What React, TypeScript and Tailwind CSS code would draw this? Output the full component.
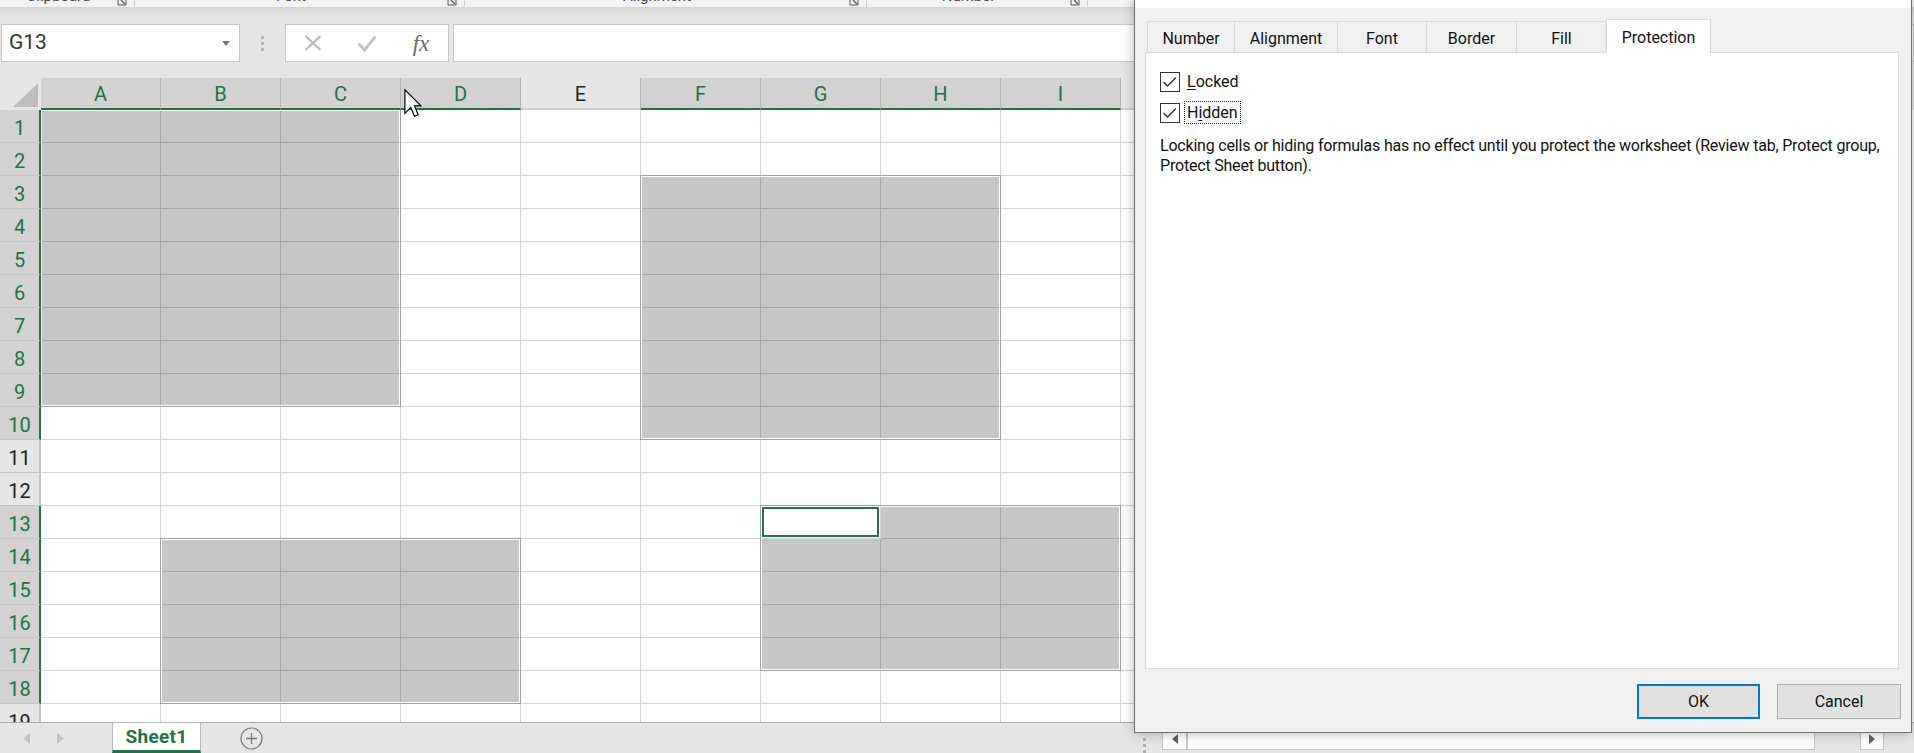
import React from 'react';

const COLS = ['A', 'B', 'C', 'D', 'E', 'F', 'G', 'H', 'I', 'J'];
const SEL_COLS = [0, 1, 2, 3, 5, 6, 7, 8];
const SEL_ROWS = [1, 2, 3, 4, 5, 6, 7, 8, 9, 10, 13, 14, 15, 16, 17, 18];
const ROWS = Array.from({ length: 19 }, (_, i) => i + 1);
const BLOCKS = [
  { c0: 0, c1: 2, r0: 1, r1: 9 },
  { c0: 5, c1: 7, r0: 3, r1: 10 },
  { c0: 1, c1: 3, r0: 14, r1: 18 },
  { c0: 6, c1: 8, r0: 13, r1: 17 },
];
const inBlock = (ci: number, r: number) =>
  BLOCKS.some((b) => ci >= b.c0 && ci <= b.c1 && r >= b.r0 && r <= b.r1);

function Launcher() {
  return (
    <svg width="10" height="8" viewBox="0 0 10 8" className="shrink-0">
      <path d="M1 0 V5 H9 V0" fill="none" stroke="#555" strokeWidth="1" />
      <path d="M4 0 L8 4" stroke="#555" strokeWidth="1.2" />
    </svg>
  );
}

function RibbonGroup({ label, className }: { label: string; className: string }) {
  return (
    <div className={`flex h-full shrink-0 items-start border-r border-[#d0d0d0] ${className}`}>
      <div className="-mt-[14px] flex-1 text-center">{label}</div>
      <div className="mr-[7px]">
        <Launcher />
      </div>
    </div>
  );
}

function CheckBox() {
  return (
    <div className="relative h-[20px] w-[20px] shrink-0 border border-[#333] bg-white">
      <svg width="18" height="18" viewBox="0 0 18 18" className="absolute left-0 top-0">
        <path d="M2.5 9 L6.5 13 L15 4.5" fill="none" stroke="#333" strokeWidth="1.5" />
      </svg>
    </div>
  );
}

function Tab({ label, className, active }: { label: string; className: string; active?: boolean }) {
  return active ? (
    <div
      className={`relative z-10 -mb-px -ml-px flex h-[34px] items-center justify-center border-x border-t border-[#d9d9d9] bg-white pt-[3px] ${className}`}
    >
      {label}
    </div>
  ) : (
    <div
      className={`-ml-px flex h-[31px] items-center justify-center border-x border-t border-[#d9d9d9] bg-[#f0f0f0] pt-[3px] first:ml-0 ${className}`}
    >
      {label}
    </div>
  );
}

export default function App() {
  return (
    <div className="relative h-[753px] w-[1914px] overflow-hidden bg-[#e6e6e6] font-['Roboto','Liberation_Sans',sans-serif] text-[#222]">
      {/* ribbon remnant */}
      <div className="flex h-[8px] overflow-hidden border-b border-[#d6d6d6] bg-[#f3f3f3] text-[15px] leading-[20px] text-[#444]">
        <RibbonGroup label="Clipboard" className="w-[135px]" />
        <RibbonGroup label="Font" className="w-[330px]" />
        <RibbonGroup label="Alignment" className="w-[402px]" />
        <RibbonGroup label="Number" className="w-[221px]" />
        <div className="flex-1" />
      </div>
      <div className="h-[8px] bg-gradient-to-b from-[#dadada] to-[#e6e6e6]" />

      {/* formula bar */}
      <div className="mt-[8px] flex h-[38px]">
        <div className="ml-[1px] flex w-[239px] shrink-0 items-center border border-[#c6c6c6] bg-white pl-[7px] pr-[9px]">
          <span className="flex-1 text-[21px] text-[#333]">G13</span>
          <svg width="8" height="5" viewBox="0 0 8 5">
            <path d="M0 0 H8 L4 5 Z" fill="#777" />
          </svg>
        </div>
        <div className="flex w-[45px] shrink-0 flex-col items-center justify-center gap-[3px]">
          <div className="h-[3px] w-[3px] bg-[#b5b5b5]" />
          <div className="h-[3px] w-[3px] bg-[#b5b5b5]" />
          <div className="h-[3px] w-[3px] bg-[#b5b5b5]" />
        </div>
        <div className="flex w-[164px] shrink-0 items-center border border-[#c6c6c6] bg-white">
          <div className="flex w-[54px] justify-center">
            <svg width="18" height="16" viewBox="0 0 18 16">
              <path d="M1.5 1 L16.5 15 M16.5 1 L1.5 15" stroke="#b6b6b6" strokeWidth="2" />
            </svg>
          </div>
          <div className="flex w-[54px] justify-center">
            <svg width="20" height="17" viewBox="0 0 20 17">
              <path d="M1.5 8.5 L7.5 15 L18.5 1.5" fill="none" stroke="#c4c4c4" strokeWidth="3" />
            </svg>
          </div>
          <div className="flex w-[54px] justify-center font-['Liberation_Serif',serif] text-[23px] italic leading-none text-[#6a6a6a]">
            fx
          </div>
        </div>
        <div className="ml-[4px] flex-1 border border-[#c6c6c6] bg-white" />
      </div>
      <div className="h-[16px]" />

      {/* column headers */}
      <div className="flex h-[32px]">
        <div className="relative w-[41px] shrink-0">
          <svg width="41" height="32" viewBox="0 0 41 32" className="absolute left-0 top-0">
            <path d="M38 5 L38 29 L13 29 Z" fill="#bdbdbd" />
          </svg>
        </div>
        {COLS.map((c, ci) => {
          const sel = SEL_COLS.includes(ci);
          return (
            <div
              key={c}
              className={`flex w-[120px] shrink-0 items-center justify-center border-b-2 border-r border-r-[#b4b4b4] pt-[2px] text-[20px] ${
                sel ? 'border-b-[#217346] bg-[#d2d2d2] text-[#217346]' : 'border-b-[#cdcdcd] bg-[#e6e6e6] text-[#222]'
              }`}
            >
              {c}
            </div>
          );
        })}
      </div>

      {/* grid body */}
      <div className="relative h-[612px] overflow-hidden bg-white">
        {ROWS.map((r) => {
          const selRow = SEL_ROWS.includes(r);
          return (
            <div key={r} className="flex h-[33px]">
              <div
                className={`relative z-10 flex w-[41px] shrink-0 items-center justify-center border-b border-r-2 border-b-[#c4c4c4] pt-[3px] text-[20px] ${
                  selRow ? 'border-r-[#217346] bg-[#d2d2d2] text-[#217346]' : 'border-r-[#c4c4c4] bg-[#e6e6e6] text-[#222]'
                }`}
              >
                {r}
              </div>
              {COLS.map((c, ci) => {
                const act = ci === 6 && r === 13;
                const sel = inBlock(ci, r) && !act;
                return (
                  <div
                    key={c}
                    className={`h-full w-[120px] shrink-0 border-b border-r ${
                      sel ? 'border-[#a6a6a6] bg-[#c6c6c6]' : 'border-[#d4d4d4] bg-white'
                    }`}
                  >
                    {act && <div className="m-[1px] h-[30px] border-2 border-[#217346]" />}
                  </div>
                );
              })}
            </div>
          );
        })}
        {BLOCKS.map((b, i) => (
          <div
            key={i}
            className="pointer-events-none absolute border border-white outline outline-1 outline-[#a0a0a0]"
            style={{
              left: 41 + b.c0 * 120,
              top: (b.r0 - 1) * 33,
              width: (b.c1 - b.c0 + 1) * 120 - 1,
              height: (b.r1 - b.r0 + 1) * 33 - 1,
            }}
          />
        ))}
      </div>

      {/* sheet tab bar */}
      <div className="flex h-[31px] border-t border-[#a8a8a8] bg-[#e6e6e6]">
        <div className="flex w-[112px] shrink-0 items-center">
          <svg width="7" height="11" viewBox="0 0 7 11" className="ml-[23px]">
            <path d="M7 0 L0 5.5 L7 11 Z" fill="#c4c4c4" />
          </svg>
          <svg width="7" height="11" viewBox="0 0 7 11" className="ml-[27px]">
            <path d="M0 0 L7 5.5 L0 11 Z" fill="#c4c4c4" />
          </svg>
        </div>
        <div className="-mt-px flex w-[89px] shrink-0 items-center justify-center border-x border-t border-[#b8b8b8] border-b-[3px] border-b-[#217346] bg-white pt-[2px] text-[19px] font-bold tracking-[0.3px] text-[#217346]">
          Sheet1
        </div>
        <div className="ml-[39px] flex items-center">
          <svg width="23" height="23" viewBox="0 0 23 23">
            <circle cx="11.5" cy="11.5" r="10.5" fill="none" stroke="#7a7a7a" strokeWidth="1.2" />
            <path d="M11.5 6 V17 M6 11.5 H17" stroke="#7a7a7a" strokeWidth="1.3" />
          </svg>
        </div>
        <div className="ml-auto flex w-[776px] shrink-0 items-start pt-[1px]">
          <div className="ml-[5px] mt-[14px] flex flex-col gap-[3px]">
            <div className="h-[3px] w-[3px] bg-[#b0b0b0]" />
            <div className="h-[3px] w-[3px] bg-[#b0b0b0]" />
            <div className="h-[3px] w-[3px] bg-[#b0b0b0]" />
          </div>
          <div className="ml-[16px] flex h-[26px] w-[25px] items-end justify-center border border-[#c6c6c6] bg-white pb-[5px]">
            <svg width="6" height="10" viewBox="0 0 6 10">
              <path d="M6 0 L0 5 L6 10 Z" fill="#606060" />
            </svg>
          </div>
          <div className="h-[26px] w-[628px] border border-[#c6c6c6] bg-white" />
          <div className="w-[45px]" />
          <div className="flex h-[26px] w-[24px] items-end justify-center border border-[#c6c6c6] bg-white pb-[5px]">
            <svg width="6" height="10" viewBox="0 0 6 10">
              <path d="M0 0 L6 5 L0 10 Z" fill="#606060" />
            </svg>
          </div>
        </div>
      </div>

      {/* Format Cells dialog (window over the sheet) */}
      <div className="absolute left-[1134px] top-0 flex h-[733px] w-[778px] flex-col border-x border-b border-[#6f6f6f] bg-[#f0f0f0] text-[16px] text-[#111] shadow-[0_0_12px_rgba(0,0,0,0.28)]">
        <div className="h-[8px] bg-white" />
        <div className="flex h-[44px] items-end pl-[12px]">
          <Tab label="Number" className="w-[88px]" />
          <Tab label="Alignment" className="w-[104px]" />
          <Tab label="Font" className="w-[90px]" />
          <Tab label="Border" className="w-[91px]" />
          <Tab label="Fill" className="w-[91px]" />
          <Tab label="Protection" className="w-[105px]" active />
        </div>
        <div className="ml-[10px] h-[617px] w-[754px] border border-[#d9d9d9] bg-white pl-[14px] pt-[17px]">
          <div className="flex items-center">
            <CheckBox />
            <span className="ml-[4px] border border-transparent px-[2px] leading-[21px]">
              <u className="underline-offset-2">L</u>ocked
            </span>
          </div>
          <div className="mt-[8px] flex items-center">
            <CheckBox />
            <span className="ml-[4px] border border-dotted border-[#222] px-[2px] leading-[21px]">
              H<u className="underline-offset-2">i</u>dden
            </span>
          </div>
          <p className="mt-[12px] w-[738px] leading-[20px] tracking-[-0.2px]">
            Locking cells or hiding formulas has no effect until you protect the worksheet (Review tab, Protect group,
            Protect Sheet button).
          </p>
        </div>
        <div className="mt-[15px] flex justify-end gap-[17px] pr-[10px]">
          <div className="flex h-[35px] w-[123px] items-center justify-center border-2 border-[#0078d7] bg-[#e1e1e1]">
            OK
          </div>
          <div className="flex h-[35px] w-[124px] items-center justify-center border border-[#adadad] bg-[#e1e1e1]">
            Cancel
          </div>
        </div>
      </div>

      {/* mouse cursor */}
      <svg width="18" height="28" viewBox="0 0 12 19" className="pointer-events-none absolute left-[404px] top-[89px]">
        <path d="M0.5 0.5 L0.5 16.5 L4.5 12.5 L7 18.5 L9.5 17.5 L7 11.5 L11.5 11.5 Z" fill="#fff" stroke="#000" strokeWidth="0.8" />
      </svg>
    </div>
  );
}
